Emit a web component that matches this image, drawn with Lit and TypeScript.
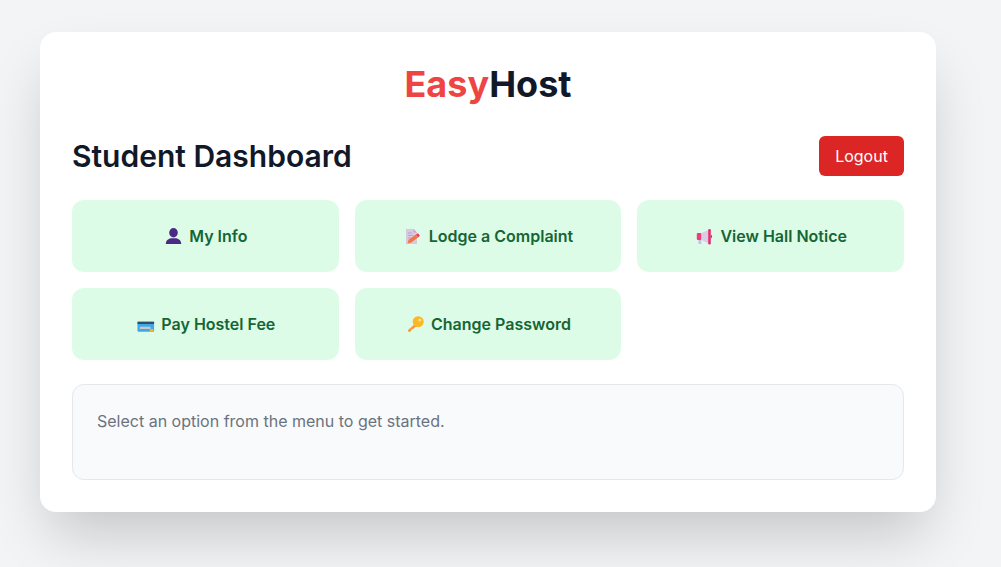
import { LitElement, html, css, svg } from "lit";
import { customElement } from "lit/decorators.js";

const icons = {
  user: svg`<ellipse cx="8" cy="4.800" rx="4.300" ry="4.700" fill="#4b2a85"/><path d="M0.300 16c0-3.500 2.400-5.300 5-5.800h5.400c2.600.5 5 2.300 5 5.800z" fill="#4b2a85"/>`,
  note: svg`<path d="M0.500 1h7.500l3.500 3.500V16h-11z" fill="#d9c8e0"/><path d="M8 1v3.500h3.500z" fill="#bfa9c9"/><path d="M2.500 5h4M2.500 7.500h5.500M2.500 10h3" stroke="#b39bc0" stroke-width=".8"/><path d="M2 15.500l1.200-3.700 7.300-5.300 2.300 2.800-7 5.200z" fill="#f4753f"/><path d="M10.500 6.500l2-1.300 1.800 2.500-1.500 1.600z" fill="#e5395f"/>`,
  megaphone: svg`<rect x="0.300" y="5" width="4.700" height="7" rx="1" fill="#ee3d79"/><path d="M5 5L12 2v13.500L5 12z" fill="#d8cce6"/><rect x="11.700" y="1" width="2.600" height="15.500" rx="1.200" fill="#e5306f"/><path d="M14.300 6.500a2.200 2.200 0 0 1 0 4z" fill="#c9336e"/><rect x="2" y="12" width="2.800" height="4" fill="#c9bfe0"/>`,
  card: svg`<rect x="0" y="5.700" width="16.600" height="10" rx="1" fill="#3fa9e8"/><rect x="0" y="5.700" width="16.600" height="2.300" fill="#2f4f6f"/><rect x="2.300" y="10.700" width="10.700" height="2.300" fill="#c8c8d0"/><rect x="12.300" y="13" width="3.400" height="2.700" fill="#f5b42a"/>`,
  key: svg`<path d="M7.500 8L0.300 14.200l.9 1.800 2.200-.6.500-1.800 1.700-.5 4.400-3.800z" fill="#f59a3c"/><circle cx="10.700" cy="5.700" r="5.500" fill="#fbb824"/><circle cx="12.300" cy="4" r="1.500" fill="#fde28a"/>`,
};

const items = [
  { icon: icons.user, label: "My Info" },
  { icon: icons.note, label: "Lodge a Complaint" },
  { icon: icons.megaphone, label: "View Hall Notice" },
  { icon: icons.card, label: "Pay Hostel Fee" },
  { icon: icons.key, label: "Change Password" },
];

@customElement("app-root")
export class AppRoot extends LitElement {
  static styles = css`
    :host { display: block; height: 567px; overflow: hidden; background: #f3f4f6; font-family: Inter, "Noto Sans", sans-serif; }
    .card { box-sizing: border-box; width: 896px; margin: 32px 0 0 40px; padding: 32px; background: #fff; border-radius: 16px; box-shadow: 0 30px 60px -10px rgba(0,0,0,.2); }
    .logo { margin: 0 0 32px; text-align: center; font-size: 36px; line-height: 40px; font-weight: 700; color: #111827; }
    .logo span { color: #ef4444; }
    .head { display: flex; justify-content: space-between; align-items: center; margin-bottom: 24px; }
    h2 { margin: 0; font-size: 30px; line-height: 36px; font-weight: 600; color: #111827; }
    .logout { border: 0; height: 40px; width: 85px; padding: 0; border-radius: 6px; background: #dc2626; color: #fff; font: 400 16px Inter, sans-serif; }
    .grid { display: grid; grid-template-columns: repeat(3, 1fr); gap: 16px; }
    .item { height: 72px; display: flex; align-items: center; justify-content: center; gap: 8px; border-radius: 12px; background: #dcfce7; color: #166534; font-size: 16px; font-weight: 600; }
    .item svg { width: 18px; height: 16px; flex: none; overflow: visible; }
    .panel { box-sizing: border-box; height: 96px; margin-top: 24px; padding: 24px; background: #f9fafb; border: 1px solid #e5e7eb; border-radius: 12px; color: #6b7280; font-size: 16px; line-height: 24px; }
  `;
  render() {
    return html`<div class="card">
      <h1 class="logo"><span>Easy</span>Host</h1>
      <div class="head"><h2>Student Dashboard</h2><button class="logout">Logout</button></div>
      <div class="grid">${items.map((t) => html`<div class="item"><svg viewBox="-2.500 0 18 16">${t.icon}</svg><span>${t.label}</span></div>`)}</div>
      <div class="panel">Select an option from the menu to get started.</div>
    </div>`;
  }
}
